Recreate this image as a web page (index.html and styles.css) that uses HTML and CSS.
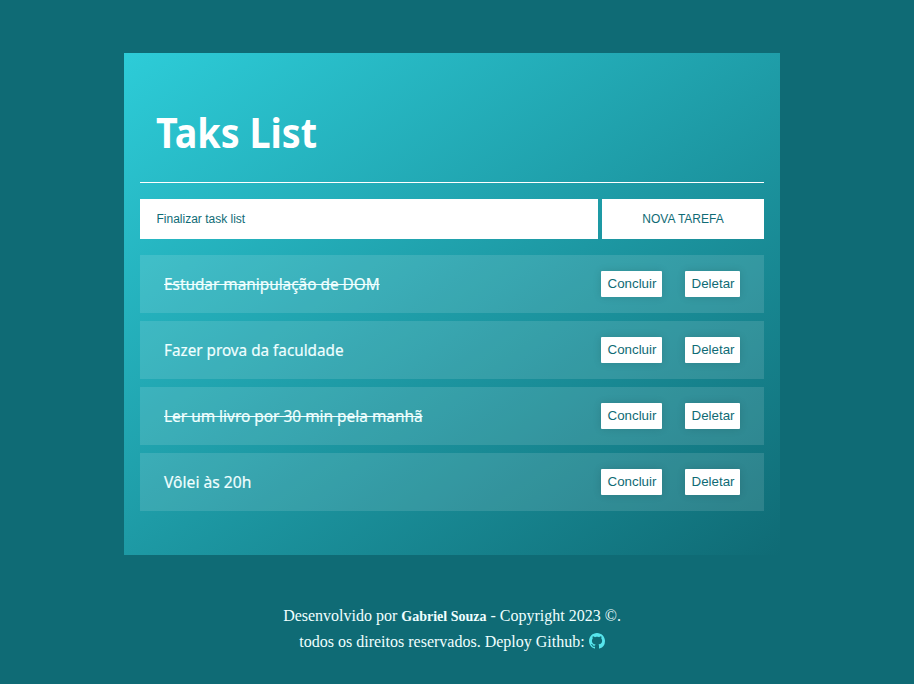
FILE: index.html
```html
<!DOCTYPE html>
<html lang="pt-BR">
<head>
<meta charset="UTF-8">
<title>Taks List</title>
<link rel="stylesheet" href="styles.css">
</head>
<body>
<main class="card">
  <h1 class="title"><span>Taks List</span></h1>
  <form class="form">
    <input class="field" type="text" value="Finalizar task list">
    <button class="add" type="button">NOVA TAREFA</button>
  </form>
  <ul class="list">
    <li class="task"><p class="name done estudar">Estudar manipulação de DOM</p><button class="action">Concluir</button><button class="action">Deletar</button></li>
    <li class="task"><p class="name fazer">Fazer prova da faculdade</p><button class="action">Concluir</button><button class="action">Deletar</button></li>
    <li class="task"><p class="name done ler">Ler um livro por 30 min pela manhã</p><button class="action">Concluir</button><button class="action">Deletar</button></li>
    <li class="task"><p class="name volei">Vôlei às 20h</p><button class="action">Concluir</button><button class="action">Deletar</button></li>
  </ul>
</main>
<footer class="footer">
  <p>Desenvolvido por <strong>Gabriel Souza</strong> - Copyright 2023 ©.</p>
  <p>todos os direitos reservados. Deploy Github: <svg class="github" viewBox="0 0 16 16" aria-hidden="true"><path d="M8 0C3.58 0 0 3.58 0 8c0 3.54 2.29 6.53 5.47 7.59.4.07.55-.17.55-.38 0-.19-.01-.82-.01-1.49-2.01.37-2.53-.49-2.69-.94-.09-.23-.48-.94-.82-1.13-.28-.15-.68-.52-.01-.53.63-.01 1.08.58 1.23.82.72 1.21 1.87.87 2.33.66.07-.52.28-.87.51-1.07-1.78-.2-3.64-.89-3.64-3.95 0-.87.31-1.59.82-2.15-.08-.2-.36-1.02.08-2.12 0 0 .67-.21 2.2.82.64-.18 1.32-.27 2-.27s1.36.09 2 .27c1.53-1.04 2.2-.82 2.2-.82.44 1.1.16 1.92.08 2.12.51.56.82 1.27.82 2.15 0 3.07-1.87 3.75-3.65 3.95.29.25.54.73.54 1.48 0 1.07-.01 1.93-.01 2.2 0 .21.15.46.55.38A8.01 8.01 0 0 0 16 8c0-4.42-3.58-8-8-8z"/></svg></p>
</footer>
</body>
</html>
```
FILE: styles.css
```css
* { box-sizing: border-box; margin: 0; padding: 0; }
body { height: 684px; overflow: hidden; background: #0f6b75; }
.card {
  width: 656px;
  height: 502px;
  margin: 53px 0 0 124px;
  padding: 16px;
  background: linear-gradient(145deg, #2dccd8, #0f6b75);
}
.title {
  height: 114px;
  padding-left: 16px;
  border-bottom: 1px solid #fff;
  color: #fff;
  font: bold 41px/127px "Noto Sans", sans-serif;
  white-space: nowrap;
}
.title span { display: inline-block; transform: scaleX(.92); transform-origin: left; }
.form { display: flex; gap: 4px; height: 40px; margin: 16px 0; }
.field, .add {
  border: 0;
  border-radius: 0;
  background: #fff;
  color: #0f6b75;
  font: 12px "Liberation Sans", Arial, sans-serif;
}
.field { width: 458px; padding: 0 16.5px; }
.add { width: 162px; }
.list { display: flex; flex-direction: column; gap: 8px; list-style: none; }
.task {
  display: flex;
  align-items: center;
  height: 58px;
  padding: 0 24px;
  background: rgba(255, 255, 255, .12);
}
.name {
  margin-right: auto;
  color: #f0ffff;
  font: 17px/24px "Noto Sans", sans-serif;
  -webkit-text-stroke: .2px #f0ffff;
  white-space: nowrap;
  transform-origin: left;
}
.done { text-decoration: line-through 1px; }
.estudar { transform: scaleX(.903); }
.fazer { transform: scaleX(.898); }
.ler { transform: scaleX(.907); }
.volei { transform: scaleX(.92); }
.action {
  height: 26px;
  width: 61px;
  padding: 0 0 2px 1px;
  border: 0;
  border-radius: 1px;
  background: #fff;
  box-shadow: 0 0 8px rgba(0, 0, 0, .12);
  color: #0f6b75;
  font: 13.33px "Liberation Sans", Arial, sans-serif;
}
.action + .action { width: 55px; margin-left: 23px; }
.footer {
  width: 904px;
  margin-top: 48px;
  color: #f0ffff;
  font: 16px/26px "Liberation Serif", "Times New Roman", serif;
  text-align: center;
}
.footer p + p { margin-top: -1px; }
.footer strong { font-size: 14px; }
.github { width: 16px; height: 16px; fill: #57e5ec; vertical-align: -2px; }
```
